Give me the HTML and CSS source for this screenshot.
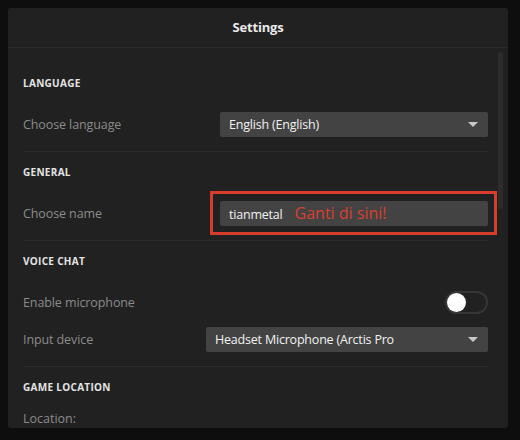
FILE: index.html
```html
<!DOCTYPE html>
<html>
<head>
<meta charset="utf-8">
<title>Settings</title>
<link rel="stylesheet" href="styles.css">
</head>
<body>
<div class="panel">
  <div class="panelHead">Settings</div>
  <div class="panelBody">
    <div class="section first">
      <h3>Language</h3>
      <div class="row">
        <span class="label">Choose language</span>
        <div class="select w268">English (English)<i class="caret"></i></div>
      </div>
    </div>
    <div class="section">
      <h3>General</h3>
      <div class="row">
        <span class="label">Choose name</span>
        <div class="input w268 marked">tianmetal<span class="hint">Ganti di sini!</span></div>
      </div>
    </div>
    <div class="section">
      <h3>Voice chat</h3>
      <div class="row">
        <span class="label">Enable microphone</span>
        <div class="toggle"><b></b></div>
      </div>
      <div class="row">
        <span class="label">Input device</span>
        <div class="select w282">Headset Microphone (Arctis Pro<i class="caret"></i></div>
      </div>
    </div>
    <div class="section last">
      <h3>Game location</h3>
      <div class="loc">Location:</div>
    </div>
    <div class="scroll"></div>
  </div>
</div>
</body>
</html>
```

FILE: styles.css
```css
html,body{margin:0;padding:0;}
body{background:#0e0e0e;font-family:"Open Sans","Noto Sans",sans-serif;padding:8px 12px 0 8px;height:432px;overflow:hidden;}
.panel{background:#212121;border-radius:3px;height:420px;overflow:hidden;}
.panelHead{height:39px;line-height:39px;text-align:center;color:#eaeaea;font-size:13px;font-weight:700;border-bottom:1px solid #2b2b2b;letter-spacing:-0.2px;}
.panelBody{position:relative;padding:0 20px 0 15px;}
.section{padding:13px 0 14px;border-bottom:1px solid #2b2b2b;}
.section.first{padding-top:28px;}
.section.last{border-bottom:0;}
.section h3{margin:0 0 22px;font-size:10px;line-height:14px;font-weight:700;text-transform:uppercase;color:#e4e4e4;letter-spacing:0.3px;}
.row{display:flex;justify-content:space-between;align-items:center;height:25px;}
.row + .row{margin-top:12px;}
.label{color:#8b8b8b;font-size:12.5px;letter-spacing:-0.1px;}
.select,.input{position:relative;box-sizing:border-box;height:25px;line-height:25px;background:#434343;border-radius:2px;padding-left:9px;color:#f2f2f2;font-size:12.5px;letter-spacing:-0.2px;}
.w268{width:268px;}
.w282{width:282px;}
.caret{position:absolute;right:10px;top:10px;width:0;height:0;border-left:5px solid transparent;border-right:5px solid transparent;border-top:5px solid #c8c8c8;}
.marked:after{content:"";position:absolute;left:-10px;top:-10px;right:-9px;bottom:-9px;border:3px solid #d83c2c;}
.hint{color:#d9402f;font-size:16px;margin-left:12px;letter-spacing:0;}
.toggle{box-sizing:border-box;width:43px;height:23px;border:2px solid #363636;border-radius:12px;display:flex;align-items:center;}
.toggle b{display:block;width:19px;height:19px;border-radius:50%;background:#fff;}
.loc{color:#8b8b8b;font-size:12.5px;line-height:18px;margin-top:-6px;}
.scroll{position:absolute;right:5px;top:4px;width:5px;height:157px;border-radius:3px;background:#2c2c2c;}
```
